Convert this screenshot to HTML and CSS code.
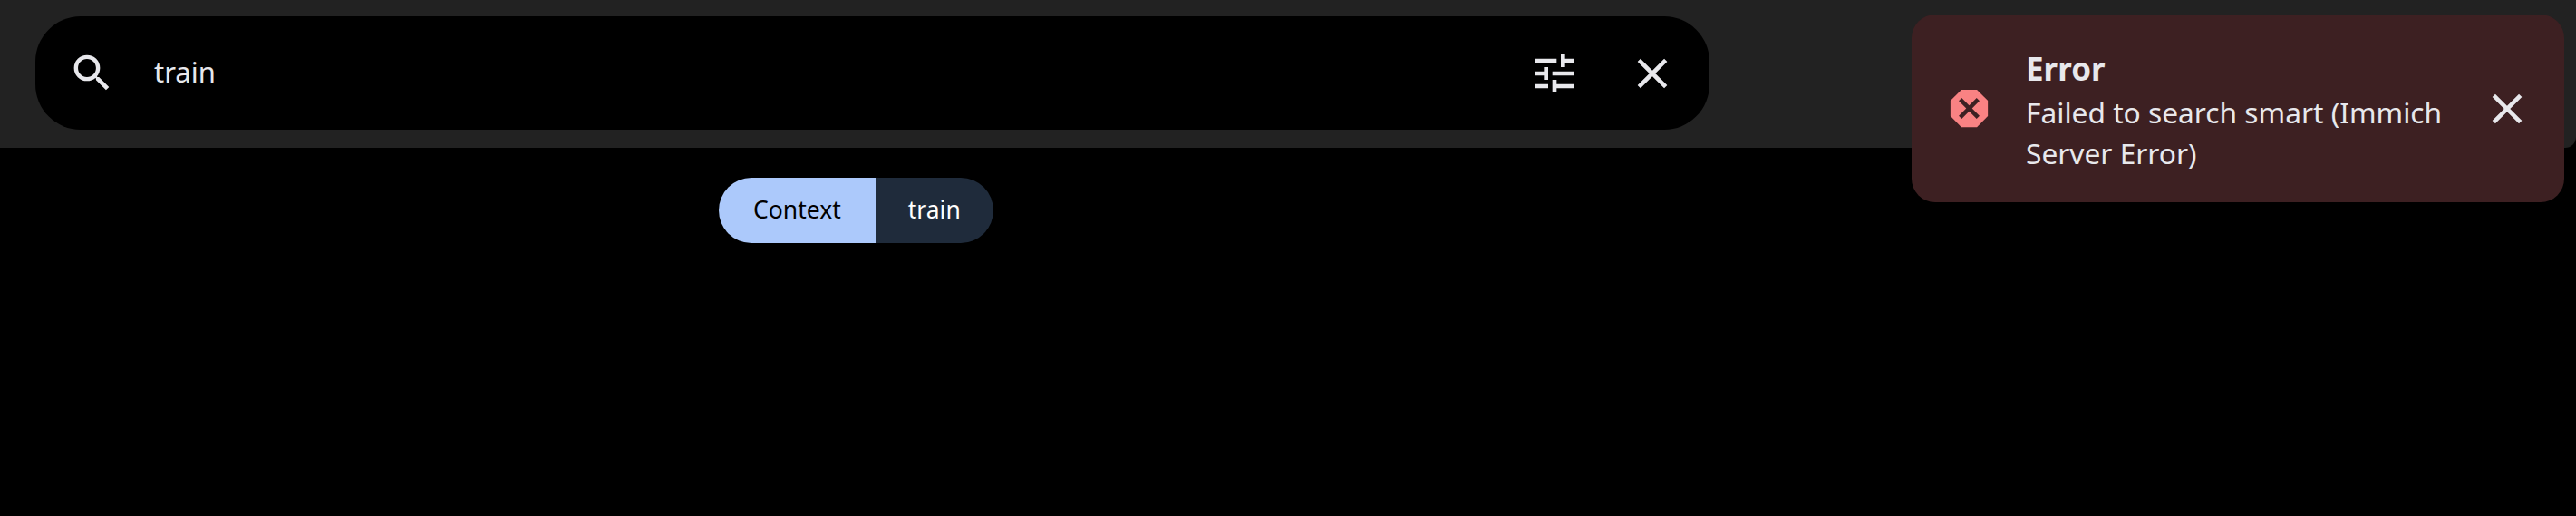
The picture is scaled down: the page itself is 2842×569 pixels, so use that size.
FILE: index.html
```html
<!DOCTYPE html>
<html lang="en">
<head>
  <meta charset="UTF-8">
  <title>Search</title>
  <meta name="viewport" content="width=device-width, initial-scale=1">
  <link rel="stylesheet" href="styles.css">
</head>
<body>

  <header class="top-bar">
    <div class="search-bar">
      <svg class="icon icon-search" viewBox="0 0 24 24"><path d="M9.5,3A6.5,6.5 0 0,1 16,9.5C16,11.11 15.41,12.59 14.44,13.73L14.71,14H15.5L20.5,19L19,20.5L14,15.5V14.71L13.73,14.44C12.59,15.41 11.11,16 9.5,16A6.5,6.5 0 0,1 3,9.5A6.5,6.5 0 0,1 9.5,3M9.5,5C7,5 5,7 5,9.5C5,12 7,14 9.5,14C12,14 14,12 14,9.5C14,7 12,5 9.5,5Z"/></svg>
      <span class="search-text">train</span>
      <svg class="icon icon-tune" viewBox="0 0 24 24"><path d="M3,17V19H9V17H3M3,5V7H13V5H3M13,21V19H21V17H13V15H11V21H13M7,9V11H3V13H7V15H9V9H7M21,13V11H11V13H21M15,9H17V7H21V5H17V3H15V9Z"/></svg>
      <svg class="icon icon-close" viewBox="0 0 24 24"><path d="M19,6.41L17.59,5L12,10.59L6.41,5L5,6.41L10.59,12L5,17.59L6.41,19L12,13.41L17.59,19L19,17.59L13.41,12L19,6.41Z"/></svg>
    </div>
  </header>

  <div class="chip">
    <span class="chip-label">Context</span>
    <span class="chip-value">train</span>
  </div>

  <div class="toast">
    <svg class="toast-icon" viewBox="0 0 24 24"><path d="M8.27,3L3,8.27V15.73L8.27,21H15.73L21,15.73V8.27L15.73,3H8.27Z"/><path class="toast-icon-x" d="M8.41,7L12,10.59L15.59,7L17,8.41L13.41,12L17,15.59L15.59,17L12,13.41L8.41,17L7,15.59L10.59,12L7,8.41L8.41,7Z"/></svg>
    <div class="toast-body">
      <h3>Error</h3>
      <p>Failed to search smart (Immich Server Error)</p>
    </div>
    <svg class="icon icon-toast-close" viewBox="0 0 24 24"><path d="M19,6.41L17.59,5L12,10.59L6.41,5L5,6.41L10.59,12L5,17.59L6.41,19L12,13.41L17.59,19L19,17.59L13.41,12L19,6.41Z"/></svg>
  </div>

</body>
</html>
```

FILE: styles.css
```css
body {
  font-family: 'Noto Sans', sans-serif;
  background: #000;
  color: #e8e8ec;
  margin: 0;
  height: 569px;
  overflow: hidden;
}

.top-bar {
  background: #222;
  height: 163px;
  padding: 18px 0 0 39px;
  box-sizing: border-box;
  border-bottom-right-radius: 12px;
}

.search-bar {
  display: flex;
  align-items: center;
  width: 1847px;
  height: 125px;
  background: #000;
  border-radius: 50px;
  box-sizing: border-box;
  padding: 0 35px 0 36px;
}

.icon {
  fill: #e8e8ec;
  flex: none;
}

.icon-search {
  width: 53px;
  height: 53px;
}

.search-text {
  flex: 1;
  margin: -3px 0 0 42px;
  font-size: 31px;
}

.icon-tune {
  width: 56px;
  height: 56px;
}

.icon-close {
  width: 56px;
  height: 56px;
  margin-left: 52px;
}

.chip {
  display: flex;
  width: fit-content;
  height: 72px;
  margin: 33px 0 0 793px;
  border-radius: 36px;
  overflow: hidden;
  font-size: 26.5px;
  line-height: 70px;
}

.chip-label {
  background: #acc9fb;
  color: #000;
  padding: 0 38px;
}

.chip-value {
  background: #1f2b3b;
  color: #fff;
  padding: 0 36px;
}

.toast {
  position: absolute;
  top: 16px;
  left: 2109px;
  width: 720px;
  height: 207px;
  display: flex;
  align-items: center;
  box-sizing: border-box;
  padding: 0 35px 0 36px;
  background: #3d2022;
  border-radius: 26px;
}

.toast-icon {
  width: 55px;
  height: 55px;
  flex: none;
  fill: #f98283;
}

.toast-icon-x {
  fill: #3d2022;
}

.toast-body {
  flex: 1;
  margin: 4px 0 0 35px;
  font-size: 31.7px;
  line-height: 45px;
}

.toast-body h3 {
  margin: 0 0 3px;
  font-size: 35px;
  font-weight: 700;
  line-height: 45px;
}

.toast-body p {
  margin: 0;
}

.icon-toast-close {
  width: 56px;
  height: 56px;
}
```
